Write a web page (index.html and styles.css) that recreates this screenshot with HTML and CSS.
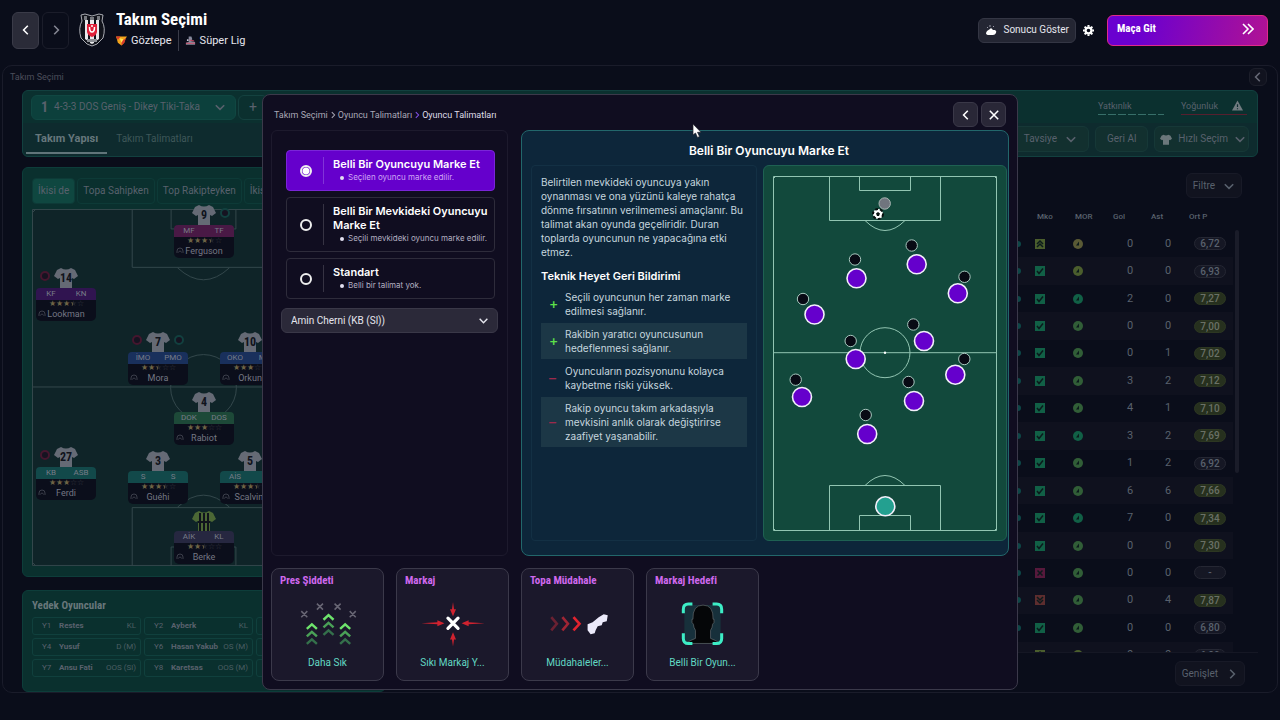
FILE: index.html
```html
<!DOCTYPE HTML>
<html lang="tr">
	<head>
		<meta charset="utf-8" />
		<title>Takım Seçimi</title>
		<link rel="stylesheet" href="styles.css">
	</head>
	<body>
		<svg class="defs" aria-hidden="true">
			<symbol id="left" viewBox="0 0 10 10"><path d="M6.5 1.5L3 5l3.500 3.500" /></symbol>
			<symbol id="right" viewBox="0 0 10 10"><path d="M3.500 1.500L7 5 3.500 8.500" /></symbol>
			<symbol id="down" viewBox="0 0 10 10"><path d="M1.500 3.500L5 7l3.500-3.500" /></symbol>
			<symbol id="close" viewBox="0 0 10 10"><path d="M1.500 1.500l7 7M8.500 1.500l-7 7" /></symbol>
			<symbol id="shirt" viewBox="0 0 24 21"><path d="M7 1Q12 4 17 1L21 3 24 9 20 12 18 11V21H6V11L4 12 0 9 3 3Z" /></symbol>
			<symbol id="check" viewBox="0 0 10 10"><path class="fill" d="M0 0h10v10H0z" /><path class="ink" d="M2 5l2 2.500 4-5" /></symbol>
			<symbol id="cross" viewBox="0 0 10 10"><path class="fill" d="M0 0h10v10H0z" /><path class="ink" d="M2.500 2.500l5 5M7.500 2.500l-5 5" /></symbol>
			<symbol id="up" viewBox="0 0 10 10"><path class="fill" d="M0 0h10v10H0z" /><path class="ink" d="M2 5l3-3 3 3M2 8l3-3 3 3" /></symbol>
			<symbol id="drop" viewBox="0 0 10 10"><path class="fill" d="M0 0h10v10H0z" /><path class="ink" d="M2 2l3 3 3-3M2 5l3 3 3-3" /></symbol>
			<symbol id="mood" viewBox="0 0 10 10"><circle class="fill" cx="5" cy="5" r="5" /><path class="dot" d="M3 6.500L6 2.500v4z" /></symbol>
			<symbol id="person" viewBox="0 0 8 8"><path d="M1 7V5a3 3 0 0 1 6 0v2M2.500 6.500L3.500 5h1l1 1.500" /></symbol>
		</svg>

		<header class="top">
			<div class="history">
				<button class="square on" aria-label="Geri"><svg class="icon"><use href="#left" /></svg></button>
				<button class="square" aria-label="İleri"><svg class="icon"><use href="#right" /></svg></button>
			</div>
			<svg class="crest" viewBox="0 0 26 34">
				<path d="M2 2L6 1 13 3 20 1 24 2 23 8Q27 15 24 25L18 31 13 33 8 31 2 25Q-1 15 3 8Z" fill="#11131b" stroke="#a9abb2" />
				<path d="M6 7h3v21l-3-2zM11 7h4v23l-2 1-2-1zM17 7h3v19l-3 2z" fill="#e9e9ec" />
				<path d="M5 3h3v4H5zM11 4h4v3h-4zM18 3h3v4h-3z" fill="#77797f" />
				<path d="M8 11h10v8q-1 4-5 5-4-1-5-5z" fill="#e0213a" />
				<path d="M10.500 14q0 5 2.500 5t2.500-5M13 12v2" fill="none" stroke="#fff" stroke-width="1.500" />
				<path d="M8 26h10v3H8z" fill="#8c8e94" />
			</svg>
			<div class="heading">
				<h1>Takım Seçimi</h1>
				<div class="club">
					<span class="team"><svg class="badge" viewBox="0 0 12 11"><path d="M0 1h12l-2 3-1 4-3 3-4-3-1-4z" fill="#f3a41c" /><path d="M0 1h5L2 5zM6 6l5-3-2 5-3 3z" fill="#d8392b" /><path d="M4 3l4 1-2 4z" fill="#ffe25a" /></svg>Göztepe</span>
					<span class="league"><svg class="badge" viewBox="0 0 12 11"><path d="M4 1h3l1 3-2 2 5 1v3H1V8l3-1z" fill="#858a9c" /><path d="M1 8.500h10M5 5l5 1" stroke="#d64a66" /><circle cx="3" cy="5" r="1" fill="#dfe1ee" /></svg>Süper Lig</span>
				</div>
			</div>
			<div class="actions">
				<button class="result">
					<svg viewBox="0 0 12 12"><path d="M2 7l3-2 1-1 2 2h2q2 1 1 3-1 2-3 2H4q-3 0-3-2z" fill="#fff" /><path d="M2 3l1 1M5 1v2M9 2L8 3" stroke="#9a9aa8" /></svg>
					Sonucu Göster
				</button>
				<button class="gear" aria-label="Ayarlar"><svg viewBox="0 0 12 12"><circle cx="6" cy="6" r="3.200" fill="none" stroke="#fff" stroke-width="2.400" /><path d="M6 0v2M6 10v2M0 6h2M10 6h2M1.800 1.800l1.400 1.400M8.800 8.800l1.400 1.400M1.800 10.200l1.400-1.400M8.800 3.200l1.400-1.400" stroke="#fff" stroke-width="2.200" /></svg></button>
				<button class="play">Maça Git<svg viewBox="0 0 12 12"><path d="M1 1l5 5-5 5M6 1l5 5-5 5" fill="none" stroke="#fff" stroke-width="1.600" /></svg></button>
			</div>
		</header>

		<main class="screen">
			<div class="crumb-bar">
				<span>Takım Seçimi</span>
				<button class="collapse" aria-label="Daralt"><svg class="icon"><use href="#left" /></svg></button>
			</div>

			<div class="content">
				<section class="tactic">
					<div class="tactic-row">
						<button class="combo"><b>1</b>4-3-3 DOS Geniş - Dikey Tiki-Taka<svg class="icon"><use href="#down" /></svg></button>
						<button class="add">+</button>
						<div class="meters">
							<div class="meter">Yatkınlık<i class="dashes"></i></div>
							<div class="meter">Yoğunluk<svg class="warn" viewBox="0 0 12 11"><path d="M6 0l6 11H0z" fill="#717b80" /><path d="M6 4v3M6 8.500v1" stroke="#0c2c2f" stroke-width="1.300" /></svg><i class="redline"></i></div>
						</div>
					</div>
					<div class="tabs-row">
						<nav class="tabs"><a class="active" href="#">Takım Yapısı</a><a href="#">Takım Talimatları</a></nav>
						<div class="tools">
							<button>Tavsiye<svg class="icon"><use href="#down" /></svg></button>
							<button>Geri Al</button>
							<button><svg class="kit"><use href="#shirt" /></svg>Hızlı Seçim<svg class="icon"><use href="#down" /></svg></button>
						</div>
					</div>
				</section>

				<div class="columns">
					<div class="left">
						<section class="formation">
							<div class="phases"><button class="active">İkisi de</button><button>Topa Sahipken</button><button>Top Rakipteyken</button><button>İkisi</button></div>
							<div class="pitch" id="pitch">
								<svg class="lines" viewBox="0 0 344 358">
									<path d="M.5 .5h343v357H.5zM0 178.500h344M100.500 0v58.500h143V0M139.500 0v20h65V0M100.500 358v-58.500h143V358M139.500 358v-19h65v19M146 59q26 24 52 0M146 299q26-24 52 0M0 4l4-4M0 354l4 4" />
									<circle cx="172" cy="179" r="33" />
								</svg>
							</div>
						</section>
						<section class="bench">
							<h2>Yedek Oyuncular</h2>
							<div class="subs">
								<div><span>Y1</span><b>Restes</b><em>KL</em></div>
								<div><span>Y2</span><b>Ayberk</b><em>KL</em></div>
								<div></div>
								<div><span>Y4</span><b>Yusuf</b><em>D (M)</em></div>
								<div><span>Y6</span><b>Hasan Yakub</b><em>OS (M)</em></div>
								<div></div>
								<div><span>Y7</span><b>Ansu Fati</b><em>OOS (Sl)</em></div>
								<div><span>Y8</span><b>Karetsas</b><em>OOS (M)</em></div>
								<div></div>
							</div>
						</section>
					</div>

					<section class="squad">
						<button class="filter">Filtre<svg class="icon"><use href="#down" /></svg></button>
						<div class="scroller">
							<table>
								<thead><tr><th class="first"></th><th>Mko</th><th>MOR</th><th>Gol</th><th>Ast</th><th class="last">Ort P</th></tr></thead>
								<tbody id="rows"></tbody>
							</table>
							<div class="bar"></div>
						</div>
						<button class="expand">Genişlet<svg class="icon"><use href="#right" /></svg></button>
					</section>
				</div>
			</div>
		</main>

		<div class="dialog" role="dialog" aria-label="Oyuncu Talimatları">
			<div class="dialog-head">
				<nav class="path">
					<a href="#">Takım Seçimi</a><svg class="icon"><use href="#right" /></svg><a href="#">Oyuncu Talimatları</a><svg class="icon violet"><use href="#right" /></svg><a class="here" href="#">Oyuncu Talimatları</a>
				</nav>
				<button aria-label="Geri"><svg class="icon"><use href="#left" /></svg></button>
				<button aria-label="Kapat"><svg class="icon"><use href="#close" /></svg></button>
			</div>

			<div class="dialog-body">
				<form class="choices">
					<label class="option picked">
						<input type="radio" name="mark" checked>
						<span class="words"><strong>Belli Bir Oyuncuyu Marke Et</strong><small>Seçilen oyuncu marke edilir.</small></span>
					</label>
					<label class="option">
						<input type="radio" name="mark">
						<span class="words"><strong>Belli Bir Mevkideki Oyuncuyu Marke Et</strong><small>Seçili mevkideki oyuncu marke edilir.</small></span>
					</label>
					<label class="option">
						<input type="radio" name="mark">
						<span class="words"><strong>Standart</strong><small>Belli bir talimat yok.</small></span>
					</label>
					<div class="select">
						<select aria-label="Oyuncu"><option>Amin Cherni (KB (Sl))</option></select>
						<svg class="icon"><use href="#down" /></svg>
					</div>
				</form>

				<section class="detail">
					<h2>Belli Bir Oyuncuyu Marke Et</h2>
					<div class="detail-body">
						<div class="info">
							<p>Belirtilen mevkideki oyuncuya yakın oynanması ve ona yüzünü kaleye rahatça dönme fırsatının verilmemesi amaçlanır. Bu talimat akan oyunda geçeliridir. Duran toplarda oyuncunun ne yapacağına etki etmez.</p>
							<h3>Teknik Heyet Geri Bildirimi</h3>
							<ul>
								<li class="plus">Seçili oyuncunun her zaman marke edilmesi sağlanır.</li>
								<li class="plus">Rakibin yaratıcı oyuncusunun hedeflenmesi sağlanır.</li>
								<li class="minus">Oyuncuların pozisyonunu kolayca kaybetme riski yüksek.</li>
								<li class="minus">Rakip oyuncu takım arkadaşıyla mevkisini anlık olarak değiştirirse zaafiyet yaşanabilir.</li>
							</ul>
						</div>
						<svg class="board" viewBox="764 166 242 374">
							<g class="chalk">
								<path d="M773.500 176.500h223v354h-223zM829.500 176v44.500h111V176M859.500 176v14.500h51V176M829.500 530v-44.500h111V530M859.500 530v-14.500h51V530M773 352.700h224" />
								<path d="M865 220.500q20 20 40 0M865 485.500q20-20 40 0M773 179l3-3M994 176l3 3M773 528l3 3M994 531l3-3" />
								<circle cx="885" cy="352.700" r="25" />
							</g>
							<circle cx="885" cy="352.700" r="1.200" fill="#fff" />
							<circle cx="884.700" cy="203.500" r="5.700" fill="#70757e" stroke="#a9b8b4" />
							<circle cx="878" cy="214" r="5" fill="#fff" stroke="#07110f" stroke-width="2" stroke-dasharray="3 2" />
							<path d="M878 212l2 1.500-1 2.500h-2l-1-2.500z" fill="#07110f" />
							<g class="rival">
								<circle cx="911.700" cy="245.500" r="5.700" /><circle cx="855" cy="259.500" r="5.700" /><circle cx="964.500" cy="276.800" r="5.700" />
								<circle cx="803" cy="299" r="5.700" /><circle cx="913.300" cy="324.500" r="5.700" /><circle cx="850.700" cy="341" r="5.700" />
								<circle cx="964.300" cy="359" r="5.700" /><circle cx="795.700" cy="379.700" r="5.700" /><circle cx="908.500" cy="382" r="5.700" /><circle cx="865.700" cy="415" r="5.700" />
							</g>
							<g class="own">
								<circle cx="916.700" cy="264.300" r="9.500" /><circle cx="856.500" cy="278.300" r="9.500" /><circle cx="957.800" cy="293.300" r="9.500" />
								<circle cx="814.500" cy="314.500" r="9.500" /><circle cx="924" cy="341" r="9.500" /><circle cx="855.700" cy="359" r="9.500" />
								<circle cx="955.300" cy="374.700" r="9.500" /><circle cx="802" cy="397" r="9.500" /><circle cx="914" cy="401" r="9.500" /><circle cx="867.200" cy="434" r="9.500" />
								<circle class="goalie" cx="885.300" cy="506.300" r="9.500" />
							</g>
						</svg>
					</div>
				</section>
			</div>

			<div class="cards">
				<button class="card">
					<b>Pres Şiddeti</b>
					<svg viewBox="0 0 110 60" fill="none">
						<path d="M29 18l6 6M35 18l-6 6M44.500 10.500l6 6M50.500 10.500l-6 6M62 10.500l6 6M68 10.500l-6 6M77 18l6 6M83 18l-6 6" stroke="#686674" stroke-width="1.500" />
						<g stroke-width="2.400"><g stroke="#6ee36c"><path d="M34.500 35.500l5-4.500 5 4.500M51 26.500l5-4.500 5 4.500M67.500 35.500l5-4.500 5 4.500" /></g>
						<g stroke="#4aa157"><path d="M34.500 43l5-4.500 5 4.500M51 34l5-4.500 5 4.500M67.500 43l5-4.500 5 4.500" /></g>
						<g stroke="#34704b"><path d="M34.500 50.500l5-4.500 5 4.500M51 41.500l5-4.500 5 4.500M67.500 50.500l5-4.500 5 4.500" /></g></g>
					</svg>
					<span>Daha Sık</span>
				</button>
				<button class="card">
					<b>Markaj</b>
					<svg viewBox="0 0 110 60">
						<path d="M50.500 25l10 10M60.500 25l-10 10" stroke="#fff" stroke-width="3.200" stroke-linecap="round" />
						<path d="M24 30l16-1v-2l7 3-7 3v-2zM87 30l-16-1v-2l-7 3 7 3v-2zM55.500 9l1 7h2l-3 7-3-7h2zM55.500 53l1-7h2l-3-7-3 7h2z" fill="#d0222f" />
					</svg>
					<span>Sıkı Markaj Y...</span>
				</button>
				<button class="card">
					<b>Topa Müdahale</b>
					<svg viewBox="0 0 110 60" fill="none" stroke-width="2.600">
						<path d="M29 24l5.500 6.500L29 37" stroke="#6b2132" /><path d="M40 24l5.500 6.500L40 37" stroke="#a02534" /><path d="M51 24l6 6.500L51 37" stroke="#e2232f" />
						<path d="M65 31l5-2 6-5 5-3 4 1-1 6-4 1-1 3-4 1-2 4-1 3-4 1-3-4z" fill="#eceafb" />
					</svg>
					<span>Müdahaleler...</span>
				</button>
				<button class="card">
					<b>Markaj Hedefi</b>
					<svg viewBox="0 0 110 60">
						<path d="M37 12h36v38H37z" fill="#17303b" />
						<path d="M39 50q3-3 9-5v-8q-2-3-2-6-2-1-1.500-5h1Q45 12 55.500 12T65.500 26h1q.5 4-1.500 5 0 3-2 6v8q6 2 9 5z" fill="#050608" stroke="#61686c" stroke-width=".7" />
						<path d="M45 11h-4q-5 0-5 5v4M65 11h4q5 0 5 5v4M36 40v5q0 5 5 5h4M74 40v5q0 5-5 5h-4" fill="none" stroke="#3dedc6" stroke-width="3" />
					</svg>
					<span>Belli Bir Oyun...</span>
				</button>
			</div>
		</div>

		<svg class="cursor" viewBox="0 0 10 16"><path d="M1 1v11l2.500-2 2 4.500 2-1-2-4.200h3.500z" fill="#fff" stroke="#20202a" stroke-width=".7" /></svg>
		<script src="script.js"></script>
	</body>
</html>
```
FILE: styles.css
```css
*{box-sizing:border-box;}
body{
	margin:0;
	background:#0a0d1a;
	color:#e6e6ee;
	font:10px/14px Roboto, "Liberation Sans", sans-serif;
}
h1,h2,h3,p,ul{margin:0;padding:0;list-style:none;}
button,select{
	font:inherit;
	color:inherit;
	margin:0;
	padding:0;
	border:1px solid transparent;
	border-radius:6px;
	background:none;
}
a{color:inherit;text-decoration:none;}
svg{display:block;flex:none;}
.defs{position:absolute;width:0;height:0;}
.icon{
	width:12px;
	height:12px;
	fill:none;
	stroke:currentColor;
	stroke-width:1.3;
}

/* top bar */
.top{
	display:flex;
	align-items:center;
	height:65px;
	padding:0 12px 5px;
}
.history{display:flex;gap:3px;}
.square{
	display:flex;
	align-items:center;
	justify-content:center;
	width:27px;
	height:37px;
	border-color:#1b1d2a;
	color:#858793;
}
.square.on{background:#2a2b38;border-color:#3a3b48;color:#fff;}
.crest{width:26px;height:34px;margin:0 11px 0 10px;}
.top h1{
	font:bold 17px/18px "Roboto Condensed", "Liberation Sans Narrow", "Liberation Sans", sans-serif;
	color:#fff;
}
.club{display:flex;align-items:center;margin-top:2px;line-height:21px;font-size:11px;}
.club span{display:flex;align-items:center;gap:4px;}
.team{padding-right:6px;}
.league{padding-left:6px;border-left:1px solid #3a3c49;}
.badge{width:11px;height:11px;}
.actions{display:flex;align-items:center;margin-left:auto;}
.result{
	display:flex;
	align-items:center;
	gap:6px;
	height:25px;
	padding:0 6px;
	background:#242633;
	border-color:#343644;
}
.result svg{width:12px;height:12px;}
.gear{margin:0 12px 0 6px;}
.gear svg{width:11px;height:11px;}
.play{
	display:flex;
	align-items:center;
	justify-content:space-between;
	width:161px;
	height:31px;
	padding:0 13px 2px 9px;
	border-color:#e02a8c;
	background:linear-gradient(100deg, #6a00d0 20%, #b01294);
	color:#fff;
	font:bold 11px/14px "Roboto Condensed", "Liberation Sans Narrow", "Liberation Sans", sans-serif;
}
.play svg{width:12px;height:12px;}

/* screen behind the dialog */
.screen{
	margin:0 2px;
	border:1px solid #1a1c2a;
	border-radius:10px;
	color:#59616d;
}
.crumb-bar{
	display:flex;
	justify-content:space-between;
	align-items:center;
	height:24px;
	padding:0 10px 3px 7px;
	font-size:9px;
	color:#4c4e5a;
}
.collapse{
	display:flex;
	align-items:center;
	justify-content:center;
	width:18px;
	height:18px;
	background:#11131f;
	border-color:#1c1e2a;
	color:#666875;
}
.content{padding:0 19px;}
.tactic{
	border:1px solid #12403f;
	border-radius:6px;
	background:#0b302f;
}
.tactic-row{
	display:flex;
	align-items:center;
	gap:2px;
	height:32px;
	padding:0 10px 0 8px;
}
.combo{
	display:flex;
	align-items:center;
	width:205px;
	height:25px;
	padding:0 9px;
	background:#0c403c;
	border-color:#104742;
	white-space:nowrap;
}
.combo b{
	margin-right:6px;
	font:bold 14px/14px "Roboto Condensed", "Liberation Sans Narrow", "Liberation Sans", sans-serif;
}
.combo .icon{margin-left:auto;}
.add{width:30px;height:25px;border-color:#14413f;font-size:14px;}
.meters{display:flex;gap:17px;margin-left:auto;font-size:9px;line-height:12px;}
.meter{display:flex;flex-wrap:wrap;justify-content:space-between;width:66px;}
.meter i{width:100%;height:1px;margin-top:2px;}
.dashes{background:repeating-linear-gradient(90deg, #376f69 0 8px, transparent 8px 10px);}
.redline{background:#571f2e;}
.warn{width:11px;height:11px;margin-right:4px;}
.tabs-row{
	display:flex;
	justify-content:space-between;
	height:33px;
	padding:0 8px 0 3px;
	background:#0e2b2e;
	border-radius:0 0 6px 6px;
}
.tabs a{
	display:inline-block;
	height:31px;
	padding:0 9px;
	line-height:31px;
	color:#3e5759;
}
.tabs .active{border-bottom:2px solid #61757a;font-weight:bold;font-size:11px;color:#66777c;}
.tools{display:flex;gap:6px;padding-top:3px;}
.tools button{
	display:flex;
	align-items:center;
	gap:8px;
	height:26px;
	padding:0 11px;
	background:#12302f;
	border-color:#163837;
}
.tools button:last-child{gap:6px;padding:0 2px 0 5px;}
.kit{width:12px;height:11px;fill:#6b777b;}

.columns{display:flex;gap:14px;padding-top:10px;}
.left{flex:none;width:364px;}
.formation{
	height:410px;
	padding:10px 9px;
	background:#0a302e;
	border:1px solid #0d3d3a;
	border-radius:6px;
}
.phases{display:flex;gap:2px;margin-bottom:5px;}
.phases button{height:26px;padding:0 5px;border-color:#0d3a37;border-radius:4px;white-space:nowrap;}
.phases .active{background:#0f4740;}
.pitch{position:relative;margin-right:1px;background:#0f2428;}
.lines{width:100%;fill:none;stroke:#33474b;}
.player{position:absolute;width:60px;text-align:center;}
.top-shirt{width:24px;height:21px;margin:0 auto;fill:#656a75;}
.keeper .top-shirt{fill:#4c6835;}
.number{
	position:absolute;
	top:4px;
	left:0;
	width:100%;
	color:#10131c;
	font:bold 12px/14px "Roboto Condensed", "Liberation Sans Narrow", "Liberation Sans", sans-serif;
}
.roles{display:flex;border-radius:4px 4px 0 0;font-size:8px;line-height:12px;color:#777c88;}
.roles span{flex:1;}
.pink{background:#491945;}
.purple{background:#301450;}
.blue{background:#19305c;}
.green{background:#1d4938;}
.teal{background:#12494a;}
.grey{background:#262740;}
.plate{position:relative;height:21px;border-radius:0 0 5px 5px;background:#0b0e1b;font-size:9px;line-height:12px;color:#747783;}
.stars{height:8px;font-size:8px;line-height:8px;color:#6d6345;}
.stars s{text-decoration:none;color:#383a42;}
.stars u{
	text-decoration:none;
	color:transparent;
	background:linear-gradient(90deg, #6d6345 50%, #22242c 50%);
	background-clip:text;
	-webkit-background-clip:text;
}
.plate svg{position:absolute;left:2px;bottom:4px;width:8px;height:8px;fill:none;stroke:#3c3f4b;}
.mark{position:absolute;top:4px;width:10px;height:10px;border-radius:50%;border:2px solid #45162e;background:#161321;}
.mark.l{left:4px;}
.mark.r{right:4px;border-color:#12403f;}

.bench{
	height:102px;
	margin-top:13px;
	padding:8px 9px;
	background:#0a302e;
	border:1px solid #0d3d3a;
	border-radius:6px;
}
.bench h2{
	margin-bottom:4px;
	font:bold 11px/14px "Roboto Condensed", "Liberation Sans Narrow", "Liberation Sans", sans-serif;
	color:#68777b;
}
.subs{display:grid;grid-template-columns:repeat(3,109px);gap:3px;}
.subs div{
	display:flex;
	align-items:center;
	height:18px;
	padding:0 4px 0 9px;
	border:1px solid #10403d;
	border-radius:3px;
	font-size:8px;
	white-space:nowrap;
}
.subs span{width:17px;}
.subs em{margin-left:auto;font-style:normal;color:#4a5e63;}

.squad{flex:1;display:flex;flex-direction:column;align-items:flex-end;min-width:0;}
.filter,.expand{
	display:flex;
	align-items:center;
	gap:8px;
	height:25px;
	padding:0 6px;
	background:#11131f;
	border-color:#181a27;
}
.filter{margin:6px 16px 0 0;}
.expand{margin:8px 13px 0 0;}
.scroller{
	position:relative;
	width:100%;
	height:449px;
	margin-top:6px;
	padding-right:25px;
	overflow:hidden;
	border-bottom:1px solid #151724;
}
.bar{position:absolute;top:26px;right:19px;width:4px;height:243px;border-radius:2px;background:#1a1c29;}
table{width:100%;border-collapse:collapse;table-layout:fixed;height:465px;}
th{width:38px;height:26px;padding:0 0 0 2px;text-align:left;font-size:8px;font-weight:500;}
th.first{width:auto;}
th.last{width:46px;}
td{padding:0;text-align:center;font-size:11px;}
tbody tr:nth-child(even){background:#0f111e;}
td:first-child::after{content:"";display:block;width:6px;height:6px;margin-left:auto;margin-right:14px;border-radius:50%;background:#0d4747;}
td svg{width:10px;height:10px;}
.ink{fill:none;stroke:#0b1a1c;stroke-width:1.5;}
.fill{fill:var(--tone);}
.dot{fill:#0b1a1c;}
.good{--tone:#116046;}
.fine{--tone:#315e37;}
.fair{--tone:#5a5a35;}
.meh{--tone:#4b5e2d;}
.bad{--tone:#57193c;}
.poor{--tone:#5d2d2e;}
.rating{
	display:block;
	width:32px;
	height:13px;
	margin:0 auto;
	border:1px solid #252733;
	border-radius:7px;
	background:#151724;
	font-size:10px;
	font-weight:500;
	line-height:11px;
}
.rating.high{background:#26301e;border-color:#2d3722;color:#6a7166;}

/* dialog */
.dialog{
	position:absolute;
	top:94px;
	left:0;
	right:0;
	width:756px;
	margin:0 auto;
	padding:7px 8px 8px;
	border:1px solid #3b394a;
	border-radius:8px;
	background:#100d20;
}
.dialog-head{display:flex;align-items:center;gap:3px;height:25px;padding-right:3px;}
.dialog-head button{
	display:flex;
	align-items:center;
	justify-content:center;
	width:25px;
	height:25px;
	background:#292737;
	border-color:#3a3848;
	color:#fff;
}
.path{
	display:flex;
	align-items:center;
	gap:1px;
	margin-right:auto;
	padding-left:3px;
	font-size:9px;
	color:#a9a7b6;
}
.path .icon{width:8px;height:8px;}
.path .violet{color:#8450e8;}
.path .here{color:#dfdde8;}
.dialog-body{display:grid;grid-template-columns:237px 1fr;gap:13px;margin-top:3px;min-height:426px;}
.choices{padding:19px 9px;border:1px solid #1d1a2d;border-radius:6px;}
.option{
	display:flex;
	align-items:center;
	min-height:41px;
	margin:0 3px 6px 5px;
	padding:6px 0;
	border:1px solid #2e2c3b;
	border-radius:4px;
}
.option.picked{background:#6500cc;border-color:#7a25d8;}
.option input{
	appearance:none;
	flex:none;
	width:12px;
	height:12px;
	margin:0 11px 0 13px;
	border:2px solid #eee;
	border-radius:50%;
}
.option input:checked{background:radial-gradient(circle, #fff 3px, #6500cc 4px);}
.words{flex:1;padding-left:9px;border-left:1px solid #363343;}
.picked .words{border-color:#8134d8;}
.words strong{display:block;font:600 11px/14px "Inter", "Liberation Sans", sans-serif;color:#fff;}
.words small{display:flex;align-items:center;font:8px/13px "Inter", "Liberation Sans", sans-serif;color:#b3b0c0;white-space:nowrap;}
.picked small{color:#cfa8f5;}
.words small::before{content:"";width:4px;height:4px;margin:0 4px 0 7px;border-radius:50%;background:#e2dff0;}
.select{position:relative;margin-top:9px;}
.select select{
	appearance:none;
	width:100%;
	height:25px;
	padding:0 9px;
	background:#2b2939;
	border-color:#3a3848;
	font-size:10px;
}
.select .icon{position:absolute;right:9px;top:7px;width:11px;height:11px;pointer-events:none;}

.detail{
	padding:0 1px 13px 9px;
	border:1px solid #22676b;
	border-radius:8px;
	background:#0d263a;
}
.detail h2{height:34px;padding-top:13px;font:600 12px/14px "Inter", "Liberation Sans", sans-serif;color:#fff;text-align:center;}
.detail-body{display:grid;grid-template-columns:226px 1fr;gap:6px;}
.info{
	padding:9px 9px;
	border:1px solid #133044;
	border-radius:4px;
	font:10px/14px "Inter", "Liberation Sans", sans-serif;
	color:#c6d6df;
}
.info h3{margin:10px 0 3px;font:600 11px/14px "Inter", "Liberation Sans", sans-serif;color:#fff;}
.info li{
	position:relative;
	margin-bottom:1px;
	padding:4px 12px 4px 24px;
}
.info li:nth-child(even){background:#1c3746;}
.info li::before{position:absolute;left:8px;top:50%;line-height:14px;margin-top:-7px;font-size:14px;font-weight:500;}
.info .plus::before{content:"+";color:#5de04a;}
.info .minus::before{content:"–";color:#9c2a4c;}
.board{
	width:100%;
	border:1px solid #1e6152;
	border-radius:6px;
	background:#12493c;
}
.chalk{fill:none;stroke:#92c5b2;}
.rival circle{fill:#080a14;stroke:#a9c9c0;}
.own circle{fill:#6500cc;stroke:#f3effa;stroke-width:1.6;}
.own .goalie{fill:#23a090;}

.cards{display:grid;grid-template-columns:repeat(4,113px);gap:12px;margin-top:12px;}
.card{
	height:113px;
	padding:5px 0 11px;
	border-color:#3b394a;
	border-radius:8px;
	background:#1b182b;
}
.card b{
	display:block;
	padding-left:8px;
	text-align:left;
	font:bold 11px/14px "Roboto Condensed", "Liberation Sans Narrow", "Liberation Sans", sans-serif;
	color:#cf68ee;
}
.card svg{width:100%;margin:5px 0 2px;}
.card span{color:#62d8c4;}
.cursor{position:absolute;left:692px;top:123px;width:10px;height:16px;}
```
FILE: script.js
```js
var rows = [
	['up', 'meh', 'fair', 0, 0, '6,72'],
	['check', 'good', 'meh', 0, 0, '6,93'],
	['check', 'good', 'good', 2, 0, '7,27'],
	['check', 'good', 'fine', 0, 0, '7,00'],
	['check', 'good', 'fine', 0, 1, '7,02'],
	['check', 'good', 'fine', 3, 2, '7,12'],
	['check', 'good', 'fine', 4, 1, '7,10'],
	['check', 'good', 'good', 3, 2, '7,69'],
	['check', 'good', 'fine', 1, 2, '6,92'],
	['check', 'good', 'fine', 6, 6, '7,66'],
	['check', 'good', 'good', 7, 0, '7,34'],
	['check', 'good', 'fine', 0, 0, '7,30'],
	['cross', 'bad', 'fine', 0, 0, '-'],
	['drop', 'poor', 'fine', 0, 4, '7,87'],
	['check', 'good', 'fine', 0, 0, '6,80'],
	['up', 'meh', 'meh', 0, 0, '6,80']
];

// x and y are the top left of the shirt on the 344px wide pitch
var players = [
	[142, -5, 9, 'pink', 'MF', 'TF', 3.5, 'Ferguson', 'r'],
	[4, 58, 14, 'purple', 'KF', 'KN', 3.5, 'Lookman', 'l'],
	[96, 122, 7, 'blue', 'İMO', 'PMO', 2.5, 'Mora', 'lr'],
	[188, 122, 10, 'blue', 'OKO', 'MO', 3, 'Orkun', ''],
	[142, 182, 4, 'green', 'DOK', 'DOS', 3, 'Rabiot', ''],
	[4, 237, 27, 'teal', 'KB', 'ASB', 3, 'Ferdi', 'l'],
	[96, 241, 3, 'teal', 'S', 'S', 3.5, 'Guéhi', ''],
	[188, 241, 5, 'teal', 'AİS', 'S', 3.5, 'Scalvini', ''],
	[142, 301, '', 'grey', 'AİK', 'KL', 2.5, 'Berke', '']
];

var html = '';
for(var i = 0;i < rows.length;i++){
	var r = rows[i];
	html += '<tr><td></td>' +
		'<td><svg class="' + r[1] + '"><use href="#' + r[0] + '"/></svg></td>' +
		'<td><svg class="' + r[2] + '"><use href="#mood"/></svg></td>' +
		'<td>' + r[3] + '</td><td>' + r[4] + '</td>' +
		'<td><span class="rating' + (r[5].charAt(0) == '7' ? ' high' : '') + '">' + r[5] + '</span></td></tr>';
}
document.getElementById('rows').innerHTML = html;

function stars(n){
	var full = Math.floor(n), half = n > full;
	return '★★★★★'.slice(0, full) + (half ? '<u>★</u>' : '') + '<s>' + '☆☆☆☆☆'.slice(Math.ceil(n)) + '</s>';
}

html = '';
for(var n = 0;n < players.length;n++){
	var p = players[n];
	html += '<div class="player' + (p[2] === '' ? ' keeper' : '') + '" style="left:' + p[0] + 'px;top:' + p[1] + 'px">' +
		'<svg class="top-shirt"><use href="#shirt"/>' +
		(p[2] === '' ? '<path d="M8 3v18M12 3v18M16 3v18M6 12h12" stroke="#10131c" stroke-width="2"/>' : '') + '</svg>' +
		'<span class="number">' + p[2] + '</span>' +
		(p[8].indexOf('l') > -1 ? '<i class="mark l"></i>' : '') +
		(p[8].indexOf('r') > -1 ? '<i class="mark r"></i>' : '') +
		'<div class="roles ' + p[3] + '"><span>' + p[4] + '</span><span>' + p[5] + '</span></div>' +
		'<div class="plate"><div class="stars">' + stars(p[6]) + '</div>' +
		'<svg><use href="#person"/></svg>' + p[7] + '</div></div>';
}
document.getElementById('pitch').insertAdjacentHTML('beforeend', html);
```
